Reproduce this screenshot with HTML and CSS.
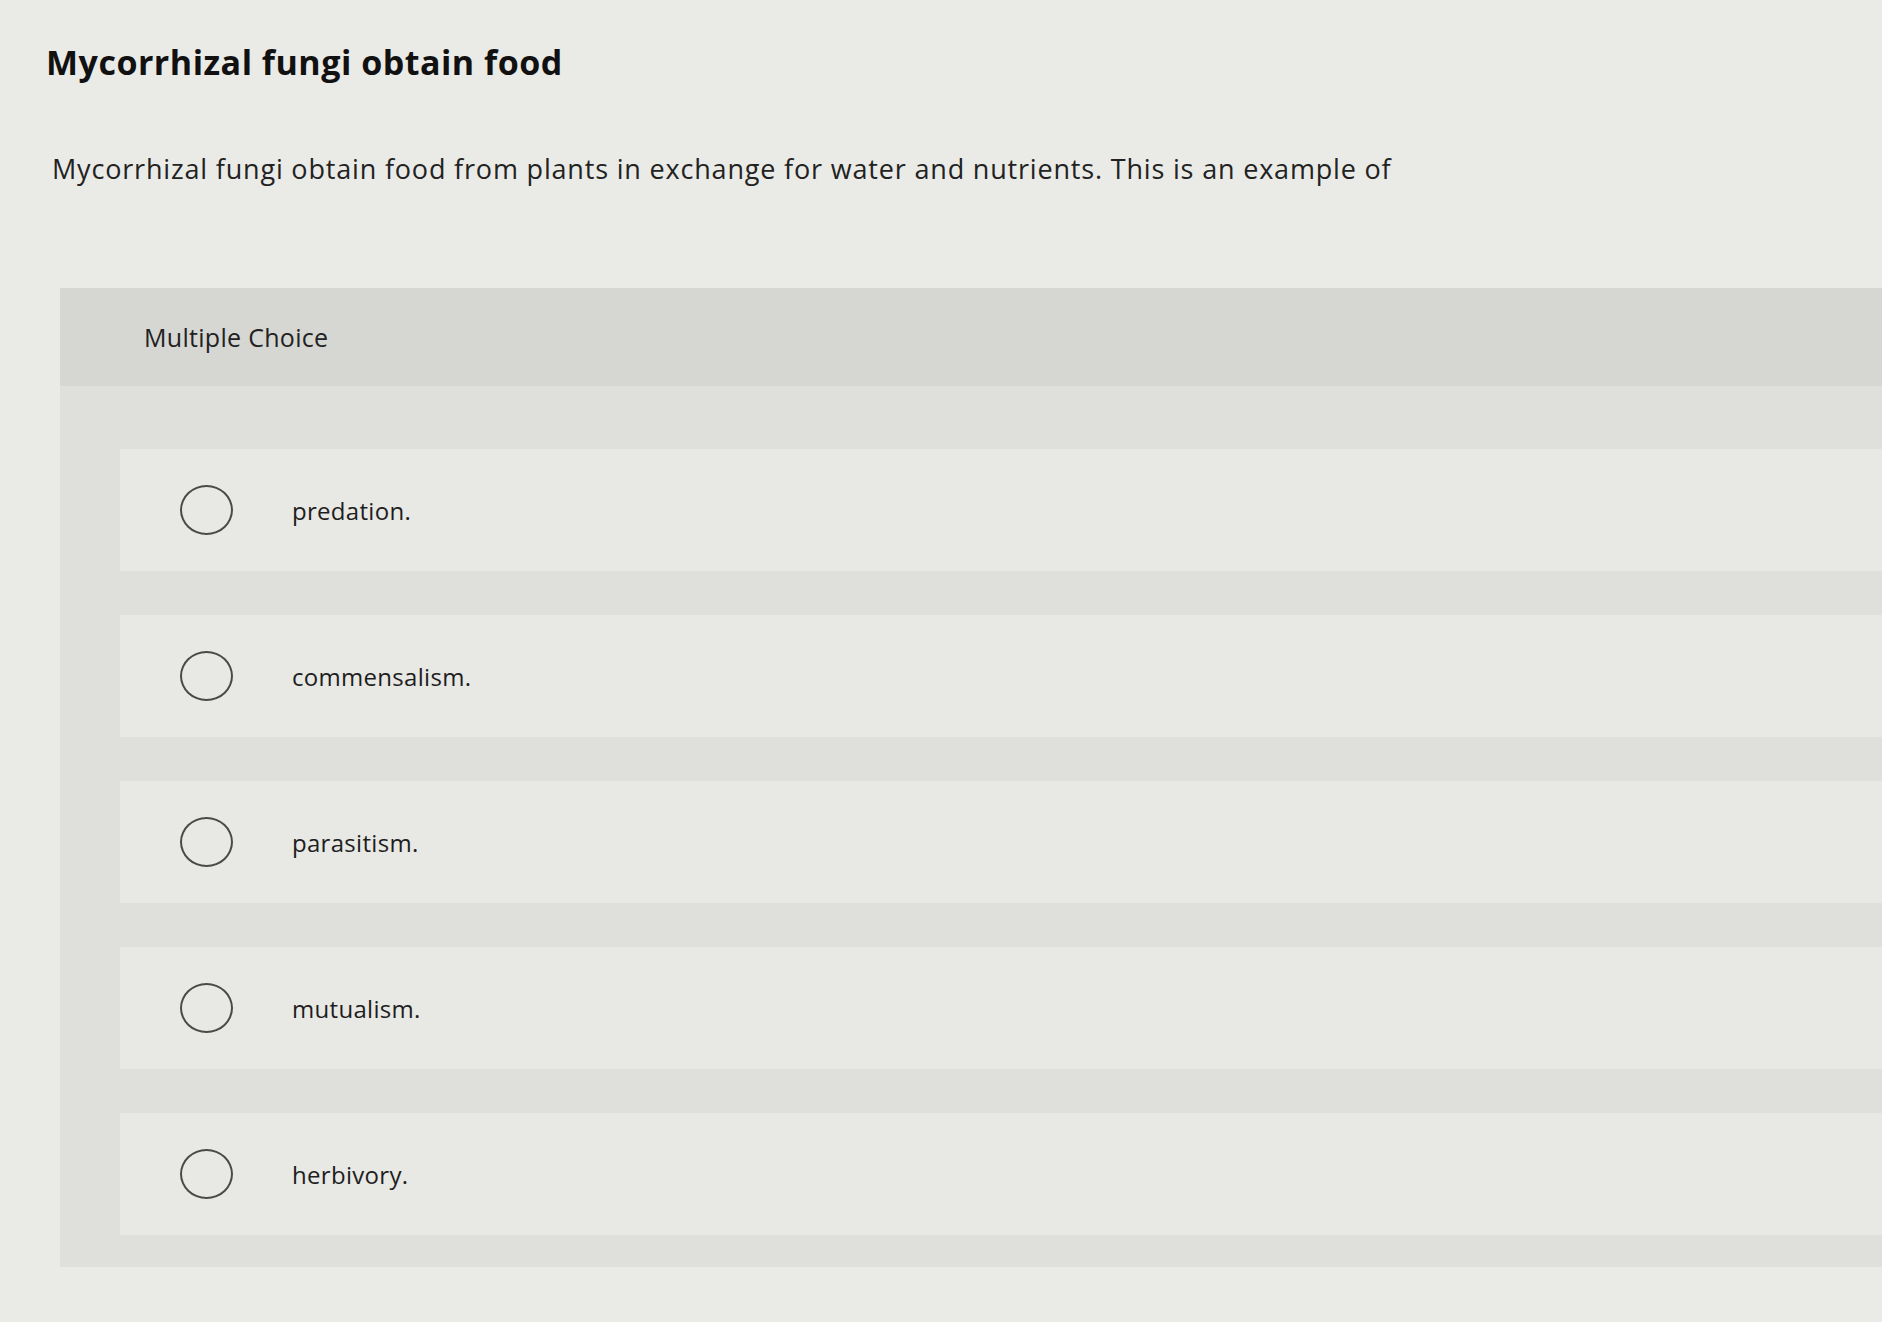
FILE: index.html
```html
<!DOCTYPE html>
<html lang="en">
<head>
  <meta charset="UTF-8"/>
  <title>Mycorrhizal fungi obtain food</title>
  <link rel="stylesheet" href="styles.css">
</head>
<body>
  <div class="page">
    <h1 class="title">Mycorrhizal fungi obtain food</h1>
    <p class="prompt">Mycorrhizal fungi obtain food from plants in exchange for water and nutrients. This is an example of</p>

    <div class="question">
      <div class="q-head">Multiple Choice</div>
      <ul class="choices">
        <li class="choice"><span class="radio"></span><span class="label">predation.</span></li>
        <li class="choice"><span class="radio"></span><span class="label">commensalism.</span></li>
        <li class="choice"><span class="radio"></span><span class="label">parasitism.</span></li>
        <li class="choice"><span class="radio"></span><span class="label">mutualism.</span></li>
        <li class="choice"><span class="radio"></span><span class="label">herbivory.</span></li>
      </ul>
    </div>
  </div>
</body>
</html>
```

FILE: styles.css
```css
* { margin:0; padding:0; box-sizing:border-box }
body {
  font-family:"Open Sans",Lato,sans-serif;
  background:#eaeae6; color:#1c1c1c;
  height:100vh; overflow:hidden;
}
.page { padding:41px 0 0 46px; }

.title {
  font-size:34px; font-weight:700; line-height:42px;
  color:#111; letter-spacing:.5px;
}
.prompt {
  margin-top:68px; margin-left:6px;
  font-size:27px; line-height:36px; color:#222;
  letter-spacing:.82px;
}

/* question box */
.question {
  margin-top:101px; margin-left:14px;
  background:#dfdfdb;
  padding-bottom:32px;
}
.q-head {
  height:98px; display:flex; align-items:center;
  padding-left:84px;
  background:#d6d6d2;
  font-size:25px; color:#222; letter-spacing:.3px;
}
.choices {
  list-style:none;
  display:flex; flex-direction:column; gap:44px;
  padding:63px 0 0 60px;
}
.choice {
  height:122px; display:flex; align-items:center;
  padding-left:60px;
  background:#e8e8e4;
}
.radio {
  width:53px; height:50px; border-radius:50%;
  border:2px solid #4a4a4a;
  flex-shrink:0;
}
.label {
  margin-left:59px;
  font-size:24px; color:#1e1e1e; letter-spacing:.3px;
}
```
